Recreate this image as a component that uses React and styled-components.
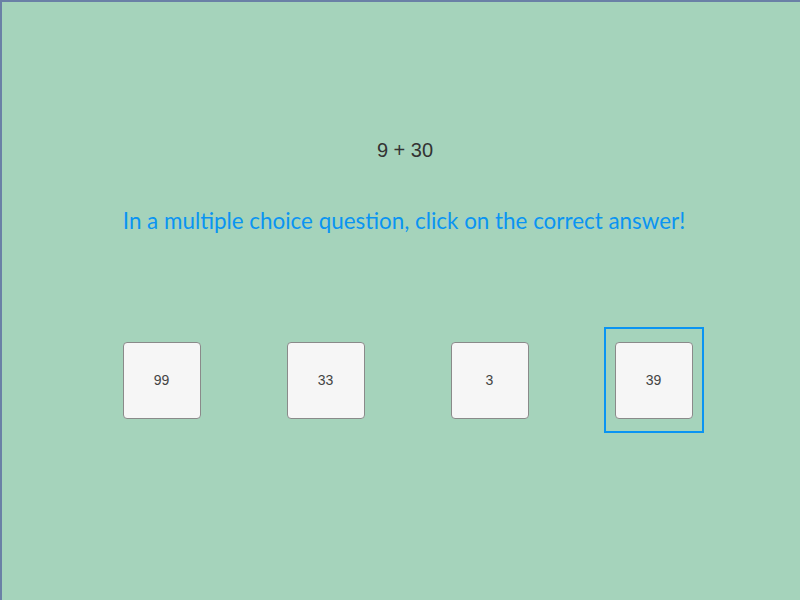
import React from 'react';
import styled, { createGlobalStyle } from 'styled-components';

const GlobalStyle = createGlobalStyle`
  html, body {
    margin: 0;
    padding: 0;
    background: #a5d3bb;
  }
`;

const choices = [99, 33, 3, 39];
const selected = 39;

const App = () => {
  return (
    <>
      <GlobalStyle />
      <Screen>
        <Question>9 + 30</Question>
        <Hint>In a multiple choice question, click on the correct answer!</Hint>
        <ChoiceRow>
          {choices.map((c) => (
            <ChoiceSlot key={c} active={c === selected}>
              <ChoiceButton>{c}</ChoiceButton>
            </ChoiceSlot>
          ))}
        </ChoiceRow>
      </Screen>
    </>
  );
};

export default App;

const Screen = styled.div`
  box-sizing: content-box;
  width: 792px;
  height: 598px;
  padding-left: 6px;
  background: #a5d3bb;
  border-top: 2px solid #6a80a6;
  border-left: 2px solid #6a80a6;
  display: flex;
  flex-direction: column;
  align-items: center;
`;

const Question = styled.div`
  margin-top: 136px;
  margin-left: 2px;
  font-family: 'Liberation Sans', Arial, sans-serif;
  font-size: 20px;
  line-height: 24px;
  color: #333;
`;

const Hint = styled.div`
  margin-top: 46px;
  font-family: Lato, 'Open Sans', sans-serif;
  font-size: 22.4px;
  line-height: 26px;
  color: #0a94f2;
`;

const ChoiceRow = styled.div`
  margin-top: 93px;
  margin-left: 7px;
  display: flex;
  gap: 64px;
`;

const ChoiceSlot = styled.div`
  width: 96px;
  height: 102px;
  display: flex;
  align-items: center;
  justify-content: center;
  border: 2px solid ${(p) => (p.active ? '#0a94f2' : 'transparent')};
`;

const ChoiceButton = styled.button`
  width: 78px;
  height: 77px;
  background: #f6f6f6;
  border: 1px solid #8a8a8a;
  border-radius: 4px;
  font-family: 'Liberation Sans', Arial, sans-serif;
  font-size: 14px;
  color: #444;
  padding: 0;
  cursor: pointer;
`;
